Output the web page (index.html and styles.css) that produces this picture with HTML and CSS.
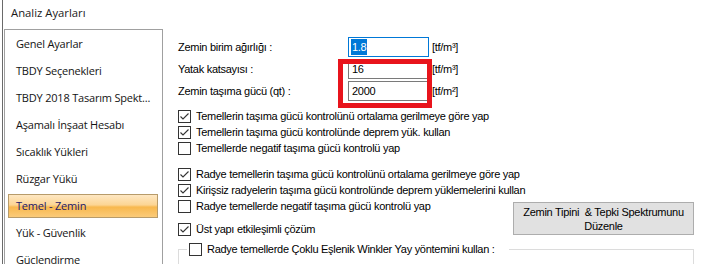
FILE: index.html
```html
<!DOCTYPE html>
<html lang="tr">
<head>
    <meta charset="UTF-8">
    <meta name="viewport" content="width=device-width, initial-scale=1.0">
    <title>Analiz Ayarları</title>
    <link rel="stylesheet" href="styles.css">
</head>
<body>
<div class="window">
    <div class="titlebar">Analiz Ayarları</div>
    <div class="main">
        <ul class="nav">
            <li>Genel Ayarlar</li>
            <li>TBDY Seçenekleri</li>
            <li>TBDY 2018 Tasarım Spekt...</li>
            <li>Aşamalı İnşaat Hesabı</li>
            <li>Sıcaklık Yükleri</li>
            <li>Rüzgar Yükü</li>
            <li class="active">Temel - Zemin</li>
            <li>Yük - Güvenlik</li>
            <li>Güçlendirme</li>
        </ul>

        <div class="panel">
            <div class="fields">
                <div class="field">
                    <span class="label">Zemin birim ağırlığı :</span>
                    <div class="textbox focused"><span class="selected">1.8</span></div>
                    <span class="unit">[tf/m³]</span>
                </div>
                <div class="field">
                    <span class="label">Yatak katsayısı :</span>
                    <div class="textbox">16</div>
                    <span class="unit">[tf/m³]</span>
                </div>
                <div class="field">
                    <span class="label">Zemin taşıma gücü (qt) :</span>
                    <div class="textbox">2000</div>
                    <span class="unit">[tf/m²]</span>
                </div>
            </div>

            <div class="checks">
                <div class="group">
                    <div class="check on"><span class="box"></span>Temellerin taşıma gücü kontrolünü ortalama gerilmeye göre yap</div>
                    <div class="check on"><span class="box"></span>Temellerin taşıma gücü kontrolünde deprem yük. kullan</div>
                    <div class="check"><span class="box"></span>Temellerde negatif taşıma gücü kontrolü yap</div>
                </div>
                <div class="group">
                    <div class="check on"><span class="box"></span>Radye temellerin taşıma gücü kontrolünü ortalama gerilmeye göre yap</div>
                    <div class="check on"><span class="box"></span>Kirişsiz radyelerin taşıma gücü kontrolünde deprem yüklemelerini kullan</div>
                    <button class="btn">Zemin Tipini &nbsp;&amp; Tepki Spektrumunu<br>Düzenle</button>
                    <div class="check"><span class="box"></span>Radye temellerde negatif taşıma gücü kontrolü yap</div>
                </div>
                <div class="group">
                    <div class="check on"><span class="box"></span>Üst yapı etkileşimli çözüm</div>
                </div>
            </div>

            <fieldset class="winkler">
                <legend><span class="check"><span class="box"></span>Radye temellerde Çoklu Eşlenik Winkler Yay yöntemini kullan :</span></legend>
            </fieldset>
        </div>
    </div>
    <div class="mark"></div>
</div>
</body>
</html>
```

FILE: styles.css
```css
body {
    margin: 0;
    background-color: #FFFFFF;
    width: 705px;
    height: 264px;
    overflow: hidden;
}
.window {
    position: relative;
    height: 264px;
    margin-left: 2px;
    border-left: 1px solid #6A6A6A;
    font-family: "Liberation Sans", Arial, sans-serif;
    font-size: 11px;
    letter-spacing: -0.28px;
    color: #000000;
}
.titlebar {
    height: 29px;
    line-height: 26px;
    padding-left: 8px;
    font-family: "Open Sans", "Noto Sans", sans-serif;
    font-size: 11.3px;
    letter-spacing: 0;
    color: #1A1A1A;
}
.main {
    display: flex;
    height: 235px;
}
.nav {
    list-style: none;
    margin: 0 0 0 1px;
    padding: 2px 0 0;
    width: 157px;
    border: 1px solid #A0A0A0;
    border-bottom: none;
    font-family: "Open Sans", "Noto Sans", sans-serif;
    font-size: 11px;
    letter-spacing: -0.2px;
    color: #141414;
}
.nav li {
    height: 24px;
    line-height: 22px;
    margin: 0 4px 3px 3px;
    padding-left: 7px;
    border: 1px solid transparent;
    box-sizing: border-box;
    white-space: nowrap;
}
.nav li.active {
    color: #24186A;
    border-color: #B79B6A;
    background: linear-gradient(#FEE7C2 0%, #FCD594 45%, #F8B84E 55%, #FBCB7A 100%);
}
.panel {
    flex: 1;
    padding: 8px 11px 0 15px;
}
.fields {
    display: flex;
    flex-direction: column;
    gap: 2px;
}
.field {
    display: flex;
    align-items: center;
    height: 20px;
}
.label {
    width: 170px;
}
.textbox {
    width: 81px;
    height: 20px;
    box-sizing: border-box;
    border: 1px solid #7A7A7A;
    padding: 0 3px;
    line-height: 18px;
    margin-right: 3px;
}
.textbox.focused {
    border-color: #0078D7;
    padding-left: 2px;
}
.selected {
    background-color: #0078D7;
    color: #FFFFFF;
    padding: 2px 1px;
}
.checks {
    margin-top: 7px;
}
.group {
    margin-bottom: 10px;
}
.group + .group {
    margin-bottom: 7px;
}
.group:last-child {
    margin-bottom: 0;
}
.check {
    display: flex;
    align-items: center;
    height: 16px;
    white-space: nowrap;
}
.box {
    width: 13px;
    height: 13px;
    box-sizing: border-box;
    border: 1px solid #333333;
    margin-right: 5px;
    flex-shrink: 0;
    background: #FFFFFF center / 11px 11px no-repeat;
}
.check.on .box {
    background-image: url("data:image/svg+xml,%3Csvg xmlns='http://www.w3.org/2000/svg' viewBox='0 0 11 11'%3E%3Cpolyline points='1.5,5.5 4,8 9.5,2.5' fill='none' stroke='%23333' stroke-width='1.1'/%3E%3C/svg%3E");
}
.btn {
    float: right;
    width: 181px;
    height: 33px;
    margin-top: 4px;
    padding: 0;
    border: 1px solid #ADADAD;
    background-color: #E1E1E1;
    font-family: "Liberation Sans", Arial, sans-serif;
    font-size: 11px;
    letter-spacing: -0.28px;
    line-height: 14px;
    color: #000000;
}
.winkler {
    margin: 4px 0 0;
    padding: 0 0 20px 8px;
    border: 1px solid #DCDCDC;
    border-bottom: none;
}
.winkler legend {
    padding: 0 14px 0 2px;
}
.mark {
    position: absolute;
    left: 335px;
    top: 59px;
    width: 94px;
    height: 49px;
    box-sizing: border-box;
    border: 5px solid #E8141C;
}
```
